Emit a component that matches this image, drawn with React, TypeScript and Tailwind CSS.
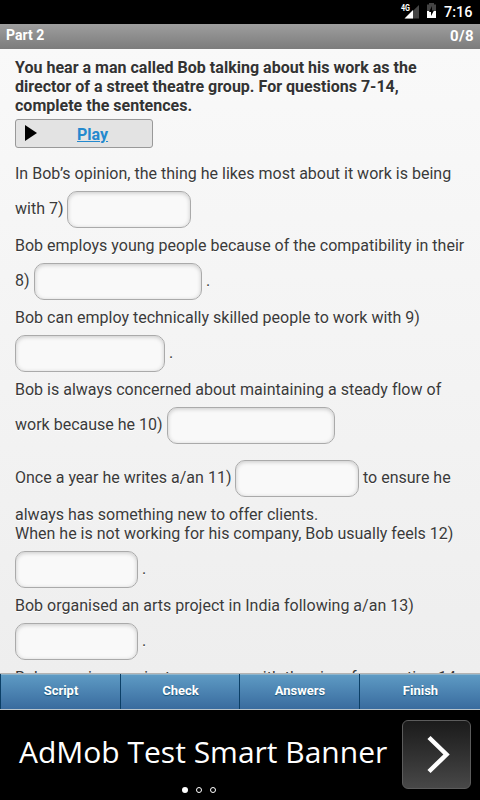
import type { ReactNode } from 'react';

const actions = ['Script', 'Check', 'Answers', 'Finish'];

const StatusBar = () => (
  <div className="h-6 bg-black flex items-center justify-end pr-2 text-white">
    <svg className="w-[20px] h-6" viewBox="0 0 20 24">
      <path d="M19 5V18.500H5z" fill="#444" />
      <path d="M13 10V18.500H4.500z" fill="#fff" />
      <text x="1" y="11" fill="#fff" fontSize="8.500" fontWeight="bold" textLength="9" lengthAdjust="spacingAndGlyphs" fontFamily="Roboto, sans-serif">4G</text>
    </svg>
    <svg className="ml-[6px] w-[11px] h-6" viewBox="0 0 11 24">
      <path d="M3 3H8V4.500H10V11H1V4.500H3z" fill="#444" />
      <path d="M1 11H10V18H1z" fill="#fff" />
      <path d="M6 6L3 12H5V16L8 10.500H6z" fill="#000" />
    </svg>
    <span className="ml-[7px] mt-[2px] w-7 text-[14.5px] leading-6 font-medium">7:16</span>
  </div>
);

const TextLine = ({ children }: { children: ReactNode }) => (
  <p className="h-[19px] leading-[19px] whitespace-nowrap">{children}</p>
);

interface BlankLineProps {
  before?: string;
  beforeWidth?: string;
  after?: string;
  width: string;
}

const BlankLine = ({ before, beforeWidth = '', after, width }: BlankLineProps) => (
  <div className="h-[53px] flex items-center whitespace-nowrap">
    {before && <span className={`${beforeWidth} shrink-0 -mt-px`}>{before}</span>}
    <input
      type="text"
      className={`${width} h-[37px] shrink-0 rounded-[10px] border border-[#aaa] bg-[#f9f9f9] px-2 shadow-[inset_0_1px_4px_rgba(0,0,0,0.2)] outline-none`}
    />
    {after && <span className="ml-1 -mt-px">{after}</span>}
  </div>
);

const App = () => {
  return (
    <div className="w-[480px] h-[800px] flex flex-col overflow-hidden bg-black font-['Roboto',sans-serif]">
      <StatusBar />

      <header className="h-[25px] shrink-0 flex justify-between pl-[6px] pr-[6px] bg-linear-to-b from-[#9e9e9e] to-[#7c7c7c] text-white font-bold">
        <span className="text-[14px] leading-[23px]">Part 2</span>
        <span className="text-[15px] leading-[25px] tracking-[0.4px]">0/8</span>
      </header>

      <main className="h-[624px] shrink-0 overflow-hidden px-[15px] pt-[9px] bg-linear-to-b from-[#f9f9f9] to-[#eee] text-[16px] text-[#3a3a3a] tracking-[0.005px] [text-shadow:0_1px_0_#fff]">
        <div className="font-bold text-[#333] tracking-[0.015px]">
          <TextLine>You hear a man called Bob talking about his work as the</TextLine>
          <TextLine>director of a street theatre group. For questions 7-14,</TextLine>
          <TextLine>complete the sentences.</TextLine>
        </div>

        <button className="mt-1 mb-4 w-[138px] h-[29px] flex items-center rounded-[3px] border border-[#999] bg-[#e3e3e3] pl-[9px]">
          <svg className="-mt-px w-3 h-4" viewBox="0 0 12 16">
            <path d="M0 0L12 8L0 16z" fill="#000" />
          </svg>
          <span className="ml-10 mt-[2px] font-bold text-[#2489ce] underline">Play</span>
        </button>

        <TextLine>In Bob’s opinion, the thing he likes most about it work is being</TextLine>
        <BlankLine before="with 7)" beforeWidth="w-[52px]" width="w-[124px]" />
        <TextLine>Bob employs young people because of the compatibility in their</TextLine>
        <BlankLine before="8)" beforeWidth="w-[19px]" width="w-[168px]" after="." />
        <TextLine>Bob can employ technically skilled people to work with 9)</TextLine>
        <BlankLine width="w-[150px]" after="." />
        <TextLine>Bob is always concerned about maintaining a steady flow of</TextLine>
        <BlankLine before="work because he 10)" beforeWidth="w-[152px]" width="w-[168px]" />
        <BlankLine before="Once a year he writes a/an 11)" beforeWidth="w-[220px]" width="w-[124px]" after="to ensure he" />
        <TextLine>always has something new to offer clients.</TextLine>
        <TextLine>When he is not working for his company, Bob usually feels 12)</TextLine>
        <BlankLine width="w-[123px]" after="." />
        <TextLine>Bob organised an arts project in India following a/an 13)</TextLine>
        <BlankLine width="w-[123px]" after="." />
        <TextLine>Bob organises projects overseas with the aim of promoting 14</TextLine>
      </main>

      <nav className="h-[37px] shrink-0 grid grid-cols-[120px_119px_120px_121px] border-t border-b border-t-[#b3b3b3] border-b-[#b8c4cc] bg-linear-to-b from-[#5f9cc5] to-[#396b9e]">
        {actions.map((action) => (
          <button
            key={action}
            className="border-l border-[#0b3f66] pl-px pb-[2px] text-[13px] font-bold text-white [text-shadow:0_1px_1px_#145072] shadow-[inset_0_1px_0_#8db4cc]"
          >
            {action}
          </button>
        ))}
      </nav>

      <footer className="h-[90px] shrink-0 flex flex-col bg-black text-white">
        <div className="h-[79px] pt-[10px] pl-[19px] pr-[9px] flex justify-between">
          <span className="font-['Open_Sans',sans-serif] text-[30px] leading-[64px] whitespace-nowrap">AdMob Test Smart Banner</span>
          <div className="w-[69px] h-[69px] flex rounded-[6px] border border-[#5c5c5c] bg-linear-to-b from-[#1b1b1b] to-[#484848]">
            <svg className="w-[67px] h-[67px]" viewBox="0 0 67 67" fill="none" stroke="#fff" strokeWidth="4.500">
              <path d="M26 16.500L43.500 33.500L26 50.500" />
            </svg>
          </div>
        </div>
        <div className="-mt-[2px] flex justify-center gap-2 pr-[82px]">
          <span className="w-[6px] h-[6px] rounded-full bg-white" />
          <span className="w-[6px] h-[6px] rounded-full border border-white" />
          <span className="w-[6px] h-[6px] rounded-full border border-white" />
        </div>
      </footer>
    </div>
  );
};

export default App;
